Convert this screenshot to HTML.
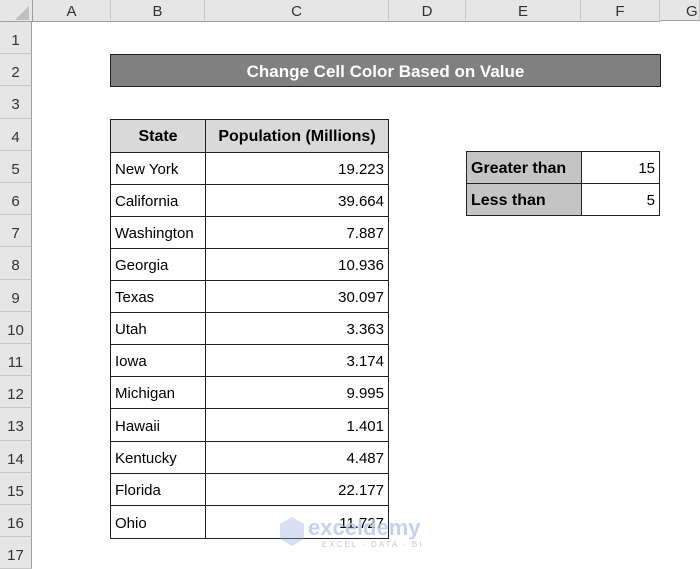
<!DOCTYPE html>
<html><head><meta charset="utf-8"><style>
body{margin:0;width:700px;height:564px;overflow:hidden;background:#fff;font-family:"Liberation Sans",Arial,sans-serif;position:relative}
.h{position:absolute;top:0;height:21px;background:#e6e6e6;border-right:1px solid #c8c8c8;border-bottom:1px solid #9f9f9f;text-align:center;line-height:23px;font-size:15px;color:#333;box-sizing:content-box}
.r{position:absolute;left:0;width:32px;background:#e6e6e6;border-right:1px solid #9f9f9f;border-bottom:1px solid #c8c8c8;text-align:center;font-size:15px;color:#333;display:flex;align-items:center;justify-content:center;padding-top:5px;box-sizing:border-box}
.c{position:absolute;box-sizing:border-box;border:1px solid #222;font-size:15px;color:#000;display:flex;align-items:center;padding:2px 4px 0;white-space:nowrap}
.b{font-weight:bold}
.g{background:#d9d9d9}
.g2{background:#c4c4c4}
.n{justify-content:flex-end}
.t{justify-content:center}
</style></head><body>
<div class="h" style="left:0;width:32px;border-right:1px solid #9f9f9f"></div>
<svg style="position:absolute;left:14px;top:6px" width="15" height="14"><polygon points="15,0 15,14 1,14" fill="#c0c0c0"/></svg>
<div class="h" style="left:33px;width:77px">A</div>
<div class="h" style="left:111px;width:93px">B</div>
<div class="h" style="left:205px;width:183px">C</div>
<div class="h" style="left:389px;width:76px">D</div>
<div class="h" style="left:466px;width:114px">E</div>
<div class="h" style="left:581px;width:78px">F</div>
<div class="h" style="left:660px;width:40px;text-align:left;padding-left:26px;box-sizing:border-box">G</div>

<div class="r" style="top:22px;height:32px">1</div>
<div class="r" style="top:54px;height:32px">2</div>
<div class="r" style="top:86px;height:33px">3</div>
<div class="r" style="top:119px;height:32px">4</div>
<div class="r" style="top:151px;height:32px">5</div>
<div class="r" style="top:183px;height:32px">6</div>
<div class="r" style="top:215px;height:32px">7</div>
<div class="r" style="top:247px;height:33px">8</div>
<div class="r" style="top:280px;height:32px">9</div>
<div class="r" style="top:312px;height:32px">10</div>
<div class="r" style="top:344px;height:32px">11</div>
<div class="r" style="top:376px;height:32px">12</div>
<div class="r" style="top:408px;height:33px">13</div>
<div class="r" style="top:441px;height:32px">14</div>
<div class="r" style="top:473px;height:32px">15</div>
<div class="r" style="top:505px;height:32px">16</div>
<div class="r" style="top:537px;height:32px">17</div>

<div class="c b t" style="left:110px;top:54px;width:551px;height:33px;background:#808080;color:#fff;font-size:17px">Change Cell Color Based on Value</div>

<div class="c b t g" style="left:110px;top:119px;width:96px;height:34px;font-size:16px">State</div>
<div class="c b t g" style="left:205px;top:119px;width:184px;height:34px;font-size:16px">Population (Millions)</div>

<div class="c" style="left:110px;top:152px;width:96px;height:33px">New York</div><div class="c n" style="left:205px;top:152px;width:184px;height:33px">19.223</div>
<div class="c" style="left:110px;top:184px;width:96px;height:33px">California</div><div class="c n" style="left:205px;top:184px;width:184px;height:33px">39.664</div>
<div class="c" style="left:110px;top:216px;width:96px;height:33px">Washington</div><div class="c n" style="left:205px;top:216px;width:184px;height:33px">7.887</div>
<div class="c" style="left:110px;top:248px;width:96px;height:33px">Georgia</div><div class="c n" style="left:205px;top:248px;width:184px;height:33px">10.936</div>
<div class="c" style="left:110px;top:280px;width:96px;height:33px">Texas</div><div class="c n" style="left:205px;top:280px;width:184px;height:33px">30.097</div>
<div class="c" style="left:110px;top:312px;width:96px;height:33px">Utah</div><div class="c n" style="left:205px;top:312px;width:184px;height:33px">3.363</div>
<div class="c" style="left:110px;top:344px;width:96px;height:33px">Iowa</div><div class="c n" style="left:205px;top:344px;width:184px;height:33px">3.174</div>
<div class="c" style="left:110px;top:376px;width:96px;height:33px">Michigan</div><div class="c n" style="left:205px;top:376px;width:184px;height:33px">9.995</div>
<div class="c" style="left:110px;top:408px;width:96px;height:34px">Hawaii</div><div class="c n" style="left:205px;top:408px;width:184px;height:34px">1.401</div>
<div class="c" style="left:110px;top:441px;width:96px;height:33px">Kentucky</div><div class="c n" style="left:205px;top:441px;width:184px;height:33px">4.487</div>
<div class="c" style="left:110px;top:473px;width:96px;height:33px">Florida</div><div class="c n" style="left:205px;top:473px;width:184px;height:33px">22.177</div>
<div class="c" style="left:110px;top:505px;width:96px;height:34px">Ohio</div><div class="c n" style="left:205px;top:505px;width:184px;height:34px">11.727</div>

<div class="c b g2" style="left:466px;top:151px;width:116px;height:33px;font-size:16px">Greater than</div><div class="c n" style="left:581px;top:151px;width:79px;height:33px">15</div>
<div class="c b g2" style="left:466px;top:183px;width:116px;height:33px;font-size:16px">Less than</div><div class="c n" style="left:581px;top:183px;width:79px;height:33px">5</div>

<svg style="position:absolute;left:280px;top:517px;opacity:.35" width="24" height="30"><polygon points="12,0 24,7 24,22 12,29 0,22 0,7" fill="#8fa6dd"/></svg>
<div style="position:absolute;left:308px;top:515px;font-size:22px;font-weight:bold;color:#b8c6ec;opacity:.8">exceldemy</div>
<div style="position:absolute;left:322px;top:540px;font-size:8px;color:#c8c8c8;letter-spacing:2px">EXCEL · DATA · BI</div>
</body></html>
